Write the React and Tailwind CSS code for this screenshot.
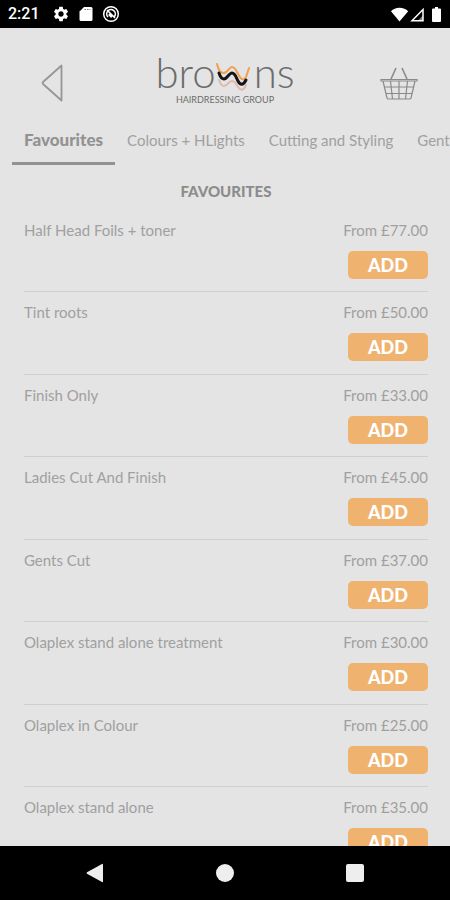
import React, { useState } from 'react';
import { MdSettings } from 'react-icons/md';

const TABS = ['Favourites', 'Colours + HLights', 'Cutting and Styling', 'Gents'];

const SERVICES = [
  { name: 'Half Head Foils + toner', price: '77.00' },
  { name: 'Tint roots', price: '50.00' },
  { name: 'Finish Only', price: '33.00' },
  { name: 'Ladies Cut And Finish', price: '45.00' },
  { name: 'Gents Cut', price: '37.00' },
  { name: 'Olaplex stand alone treatment', price: '30.00' },
  { name: 'Olaplex in Colour', price: '25.00' },
  { name: 'Olaplex stand alone', price: '35.00' },
];

function StatusBar() {
  return (
    <div className="flex h-7 shrink-0 items-center bg-black px-2 text-white">
      <span className="w-11 font-['Roboto',sans-serif] text-base font-medium leading-7">2:21</span>
      <div className="flex items-center gap-2">
        <MdSettings size={18} />
        <svg width="16" height="18" viewBox="0 0 16 18" fill="currentColor">
          <path d="M6 2h7a1.500 1.500 0 0 1 1.500 1.500v11A1.500 1.500 0 0 1 13 16H3a1.500 1.500 0 0 1-1.500-1.500V6.500z" />
          <path d="M6.500 4.500h6" stroke="#777" strokeDasharray="1.500 1" />
        </svg>
        <svg width="18" height="18" viewBox="0 0 18 18" fill="none" stroke="currentColor">
          <circle cx="9" cy="9" r="7.300" strokeWidth="1.500" />
          <path d="M6 12a4.300 4.300 0 1 1 6.500-.5M5 5l8 8" strokeWidth="1.600" />
          <path d="M7 9l3 3" strokeWidth="2.500" />
        </svg>
      </div>
      <svg className="ml-auto" width="54" height="18" viewBox="0 0 54 18" fill="currentColor">
        <path d="M11.500 16.500L3 6.200C5 4 8 2.800 11.500 2.800S18 4 20.200 6.200z" />
        <path d="M35 4.500v11.300H24z" fill="none" stroke="currentColor" strokeWidth="1.500" />
        <path d="M30 15.500l5-5v5z" opacity="0.500" />
        <path d="M45 3.500h2V2h3v1.500h2q1 0 1 1V16q0 1-1 1h-7q-1 0-1-1V4.500q0-1 1-1z" />
      </svg>
    </div>
  );
}

function Logo() {
  return (
    <div className="flex flex-col items-center gap-0.5 pb-2 text-[#6c6c6c]">
      <div className="flex items-center text-[42px] font-light leading-10">
        <span>bro</span>
        <svg width="38" height="40" viewBox="0 0 38 40" fill="none" strokeLinecap="round">
          <path d="M3 28c1 3 2 6 5 6s5-5 8-5 4 3 6 6 5 5 8-2" stroke="#dfb9ae" strokeWidth="2" />
          <path d="M1 12c1 4 2 8 6 9s6-6 9-6 4 3 6 7 5 8 8 3l3-9" stroke="#f2a04e" strokeWidth="2" />
          <path d="M3 21c1 3 2 6 5 6s5-6 8-6 4 4 6 8 5 5 8-1" stroke="#151515" strokeWidth="3" />
        </svg>
        <span>ns</span>
      </div>
      <span className="text-[9px] leading-3">HAIRDRESSING GROUP</span>
    </div>
  );
}

function Header() {
  return (
    <header className="flex shrink-0 items-center justify-between pl-10 pr-8 pt-6">
      <button type="button" aria-label="Back" className="w-[30px]">
        <svg width="24" height="40" viewBox="0 0 24 40" fill="none" stroke="#969696" strokeWidth="1.800" strokeLinejoin="round">
          <path d="M21.500 2.500v35L3 21q-1-1 0-2z" />
        </svg>
      </button>
      <Logo />
      <button type="button" aria-label="Basket">
        <svg width="38" height="36" viewBox="0 0 38 36" fill="none" stroke="#8a8a8a" strokeWidth="1.200">
          <path d="M1 14.500h36v1.500H1zM3 16l4 17q.3 1 1.500 1h21q1.200 0 1.500-1l4-17" />
          <path d="M4.500 22h29M6 28.500h26" />
          <path d="M10.500 16l2 18M19 16v18M27.500 16l-2 18" />
          <path d="M11 14l5-11M27 14L22 3" strokeWidth="1.600" />
        </svg>
      </button>
    </header>
  );
}

export default function App() {
  const [active, setActive] = useState('Favourites');

  return (
    <div className="flex h-screen flex-col overflow-hidden bg-[#e4e4e4] font-['Lato',sans-serif] text-[15px] leading-5 text-[#a0a0a0]">
      <StatusBar />
      <Header />

      <nav className="mt-4 flex shrink-0 overflow-hidden pl-3">
        {TABS.map((tab) => (
          <button
            key={tab}
            type="button"
            onClick={() => setActive(tab)}
            className={
              tab === active
                ? 'shrink-0 border-b-3 border-[#929292] px-3 pb-3 text-[17px] font-black text-[#929292]'
                : 'shrink-0 border-b-3 border-transparent px-3 pb-3'
            }
          >
            {tab}
          </button>
        ))}
      </nav>

      <main className="min-h-0 flex-1 overflow-y-auto pl-6 pr-[22px] pt-4 [scrollbar-width:none]">
        <h1 className="text-center font-black text-[#8c8c8c]">FAVOURITES</h1>
        <ul className="pt-[9px]">
          {SERVICES.map((service) => (
            <li
              key={service.name}
              className="flex items-start justify-between border-b border-[#cfcfcf] pt-2.5 odd:pb-3 even:pb-[13px]"
            >
              <span>{service.name}</span>
              <div className="flex flex-col items-end gap-[11px]">
                <span>From £{service.price}</span>
                <button type="button" className="h-7 w-20 rounded-[5px] bg-[#efb26f] text-lg font-black leading-7 text-white">
                  ADD
                </button>
              </div>
            </li>
          ))}
        </ul>
      </main>

      {/* Android navigation */}
      <div className="grid h-[54px] shrink-0 grid-cols-3 items-center bg-black px-[30px] text-[#eee]">
        <button type="button" aria-label="System back" className="flex justify-center">
          <svg width="20" height="20" viewBox="0 0 20 20" fill="currentColor">
            <path d="M18 1.500v17q0 1-1 .5L2 10.700q-1-.7 0-1.400L17 1q1-.5 1 .5z" />
          </svg>
        </button>
        <button type="button" aria-label="Home" className="flex justify-center">
          <span className="h-[18px] w-[18px] rounded-full bg-[#eee]" />
        </button>
        <button type="button" aria-label="Recent apps" className="flex justify-center">
          <span className="h-[18px] w-[18px] rounded-xs bg-[#eee]" />
        </button>
      </div>
    </div>
  );
}
